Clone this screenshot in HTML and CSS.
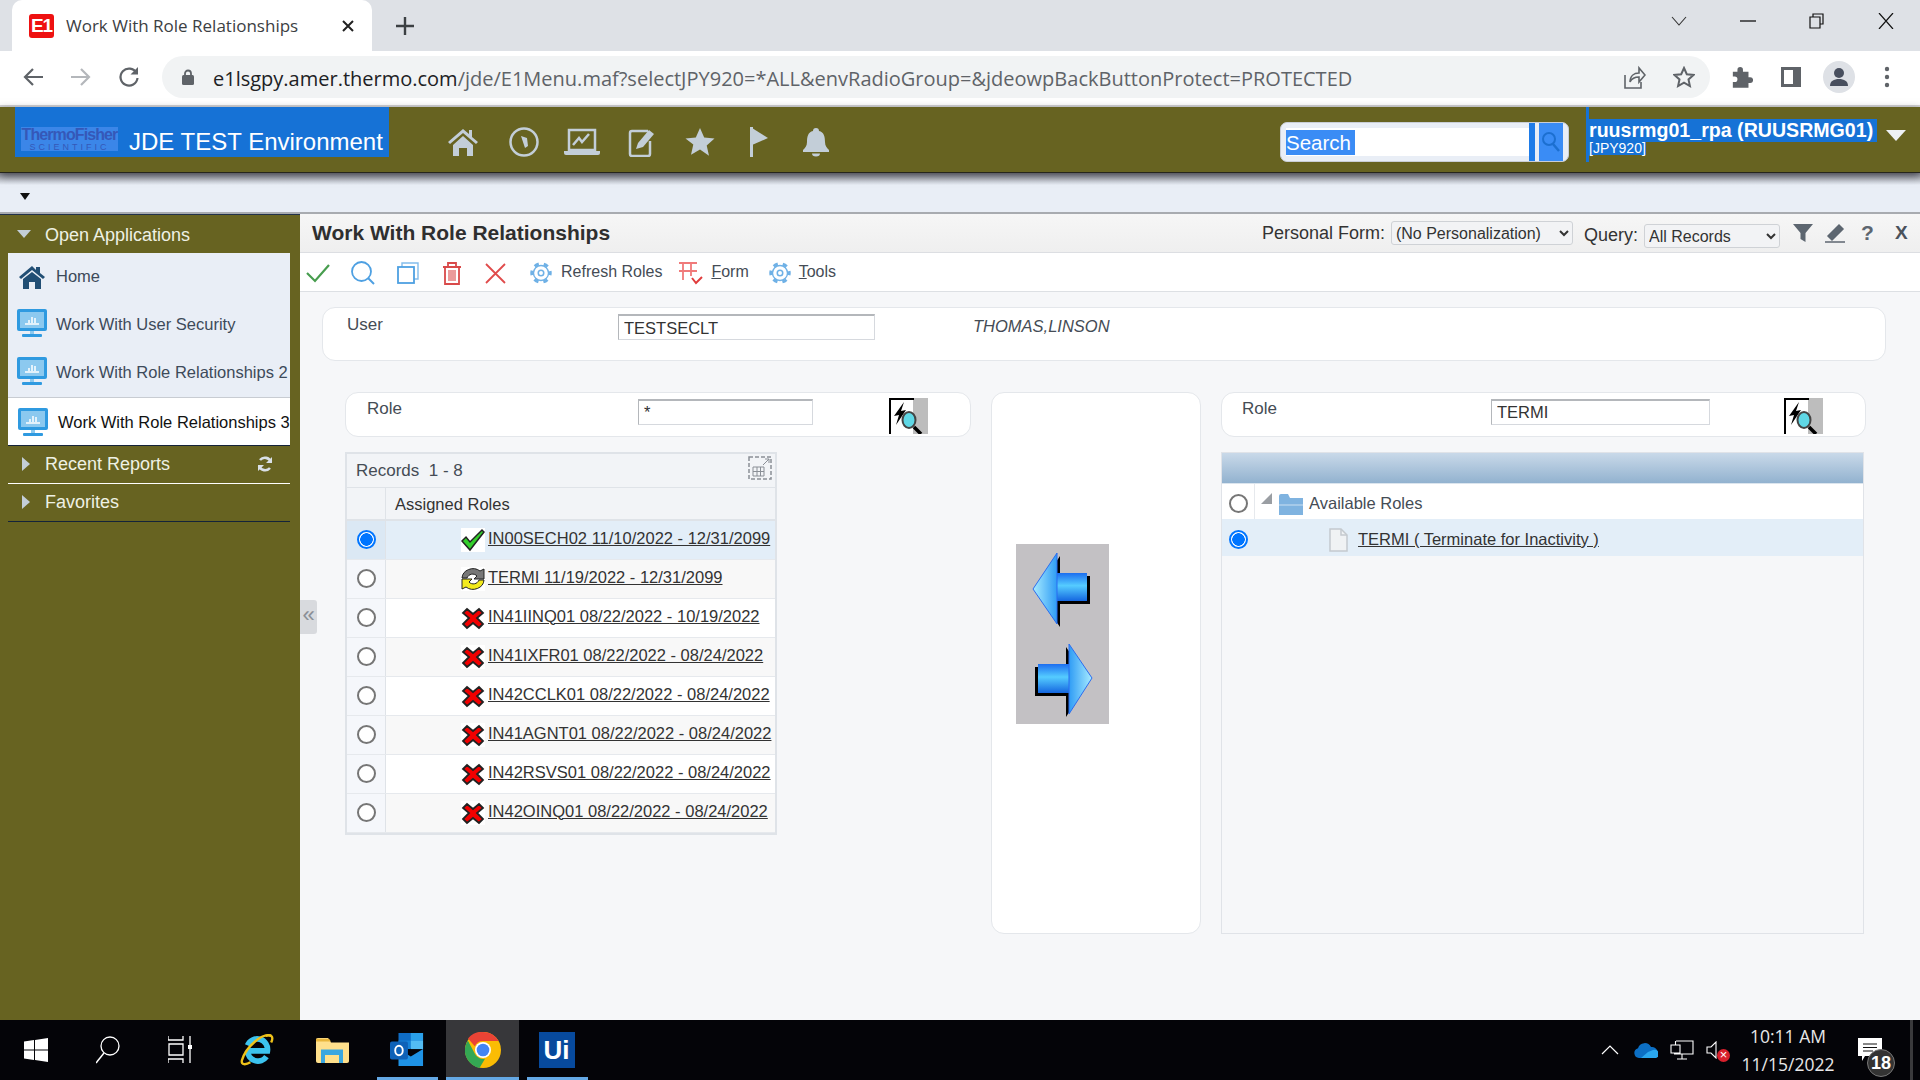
FILE: index.html
```html
<!DOCTYPE html>
<html lang="en">
<head>
    <meta charset="UTF-8">
    <title>Work With Role Relationships</title>
    <link rel="stylesheet" href="styles.css">
</head>
<body>

    <!-- Shared icons -->
    <svg class="icon-defs" width="0" height="0">
        <defs>
            <linearGradient id="arrow-fill" x1="0" y1="0" x2="0" y2="1">
                <stop offset="0" stop-color="#1c6ef0"/>
                <stop offset="0.45" stop-color="#55ccff"/>
                <stop offset="1" stop-color="#1466e0"/>
            </linearGradient>
            <linearGradient id="head-left" x1="0" y1="0" x2="1" y2="0">
                <stop offset="0" stop-color="#a8ecff"/>
                <stop offset="1" stop-color="#2f9cf5"/>
            </linearGradient>
            <linearGradient id="head-right" x1="0" y1="0" x2="1" y2="0">
                <stop offset="0" stop-color="#2f9cf5"/>
                <stop offset="1" stop-color="#a8ecff"/>
            </linearGradient>
            <symbol id="ic-gear" viewBox="0 0 24 24">
                <circle cx="12" cy="12" r="8.2" fill="none" stroke="#6fb1e6" stroke-width="1.5"/>
                <circle cx="12" cy="12" r="10" fill="none" stroke="#6fb1e6" stroke-width="3.4" stroke-dasharray="5 5.47" stroke-dashoffset="2.5"/>
                <circle cx="12" cy="12" r="6.5" fill="#fff"/>
                <circle cx="12" cy="12" r="3" fill="none" stroke="#6fb1e6" stroke-width="1.7"/>
            </symbol>
            <symbol id="ic-lookup" viewBox="0 0 39 36">
                <rect width="39" height="36" fill="#fff"/>
                <rect x="24" width="15" height="36" fill="#bdbdbd"/>
                <path d="M1 36V1h24" fill="none" stroke="#000" stroke-width="2"/>
                <path d="M15 4L5 18l5-1-3 10 10-15-5 1z" fill="#000"/>
                <ellipse cx="20" cy="22" rx="6.5" ry="8" fill="#5fd8e6" stroke="#444" stroke-width="2"/>
                <path d="M25 29l7 7" stroke="#000" stroke-width="3.5"/>
            </symbol>
            <symbol id="ic-fail" viewBox="0 0 24 24">
                <rect width="24" height="24" fill="#fff"/>
                <path d="M6 3l6 5 6-5 4 4-6 5 6 6-4 4-6-5-6 5-4-4 6-6-6-5z" fill="#f20000" stroke="#222" stroke-width="1.8"/>
            </symbol>
            <symbol id="ic-monitor" viewBox="0 0 30 29">
                <rect width="30" height="22" rx="2" fill="#2f9ae0"/>
                <rect x="3" y="3" width="24" height="16" fill="#8cc9ef"/>
                <path d="M8 15h14M12 14v-3M15 14V8M18 14v-5" stroke="#fff" stroke-width="1.5"/>
                <rect x="5" y="25" width="20" height="3" rx="1" fill="#2f9ae0"/>
                <rect x="13" y="22" width="4" height="3" fill="#8cc9ef"/>
            </symbol>
        </defs>
    </svg>

    <!-- Browser tabs -->
    <div class="tabstrip">
        <div class="tab">
            <span class="favicon">E1</span>
            <span class="tab-title">Work With Role Relationships</span>
            <svg class="tab-close" width="12" height="12" viewBox="0 0 12 12"><path d="M1 1l10 10M11 1L1 11" stroke="#222" stroke-width="2"/></svg>
        </div>
        <svg class="tab-new" width="18" height="18" viewBox="0 0 18 18"><path d="M9 0v18M0 9h18" stroke="#3c4043" stroke-width="2.4"/></svg>
        <div class="window-controls">
            <svg width="16" height="10" viewBox="0 0 16 10"><path d="M1 1l7 8 7-8" fill="none" stroke="#333" stroke-width="1.1"/></svg>
            <svg width="16" height="2" viewBox="0 0 16 2"><path d="M0 1h16" stroke="#111" stroke-width="1.3"/></svg>
            <svg width="16" height="16" viewBox="0 0 16 16"><path d="M1 4h10v11H1zM4 4V1h10v10h-3" fill="none" stroke="#111" stroke-width="1.2"/></svg>
            <svg width="16" height="16" viewBox="0 0 16 16"><path d="M1 0l14 16M15 0L1 16" stroke="#111" stroke-width="1.2"/></svg>
        </div>
    </div>

    <!-- Address bar -->
    <div class="addressbar">
        <svg class="nav-btn nav-back" width="22" height="20" viewBox="0 0 22 20"><path d="M21 10H3M11 2l-8 8 8 8" fill="none" stroke="#5f6368" stroke-width="2.2"/></svg>
        <svg class="nav-btn nav-fwd" width="22" height="20" viewBox="0 0 22 20"><path d="M1 10h18M11 2l8 8-8 8" fill="none" stroke="#b4b7bb" stroke-width="2.2"/></svg>
        <svg class="nav-btn nav-reload" width="22" height="22" viewBox="0 0 22 22"><path d="M18.5 7A8.5 8.5 0 1 0 19.5 12" fill="none" stroke="#5f6368" stroke-width="2.2"/><path d="M20 1v7.5h-7.5z" fill="#5f6368"/></svg>
        <div class="omnibox">
            <svg class="lock" width="12" height="16" viewBox="0 0 12 16"><path d="M3 7V4.500a3 3 0 0 1 6 0V7" fill="none" stroke="#5f6368" stroke-width="1.8"/><rect y="6" width="12" height="10" rx="1.5" fill="#5f6368"/></svg>
            <span class="url"><span class="url-host">e1lsgpy.amer.thermo.com</span>/jde/E1Menu.maf?selectJPY920=*ALL&amp;envRadioGroup=&amp;jdeowpBackButtonProtect=PROTECTED</span>
            <svg class="omni-share" width="22" height="24" viewBox="0 0 22 24"><path d="M1 10v13h16v-6M6 17c0-6 4-9 9-9V3l6 7-6 7v-5c-4 0-7 1-9 5z" fill="none" stroke="#5f6368" stroke-width="1.6"/></svg>
            <svg class="omni-star" width="22" height="22" viewBox="0 0 22 22"><path d="M11 2l2.800 6.200 6.700.7-5 4.500 1.400 6.600L11 16.600 5.100 20l1.400-6.600-5-4.500 6.700-.7z" fill="none" stroke="#5f6368" stroke-width="2"/></svg>
        </div>
        <svg class="ext-icon" width="22" height="24" viewBox="0 0 22 24"><path d="M2 7h5V5a3 3 0 0 1 6 0v2h6v6h2a3 3 0 0 1 0 6h-2v5H2v-6h2a3 3 0 0 0 0-6H2z" fill="#5f6368" transform="scale(.92 .95)"/></svg>
        <svg class="side-icon" width="20" height="20" viewBox="0 0 20 20"><rect x="1.5" y="1.5" width="17" height="17" fill="none" stroke="#5f6368" stroke-width="3"/><rect x="12" y="2" width="6" height="16" fill="#5f6368"/></svg>
        <svg class="avatar" width="32" height="32" viewBox="0 0 32 32"><circle cx="16" cy="16" r="16" fill="#dee1e6"/><circle cx="16" cy="12" r="5" fill="#484f5e"/><path d="M7 25c0-5 4-7 9-7s9 2 9 7z" fill="#484f5e"/></svg>
        <svg class="menu-dots" width="6" height="22" viewBox="0 0 6 22"><circle cx="3" cy="3" r="2.2" fill="#5f6368"/><circle cx="3" cy="11" r="2.2" fill="#5f6368"/><circle cx="3" cy="19" r="2.2" fill="#5f6368"/></svg>
    </div>

    <!-- JDE header -->
    <div class="jde-header">
        <div class="brand">
            <div class="brand-logo">
                <span class="logo-top">ThermoFisher</span>
                <span class="logo-bottom">SCIENTIFIC</span>
            </div>
            <span class="brand-name">JDE TEST Environment</span>
        </div>
        <div class="header-icons">
            <svg width="30" height="28" viewBox="0 0 30 28"><path d="M15 1L0 14l2 2L15 5l13 11 2-2-6-5V2h-3v4z" fill="#c3ced8"/><path d="M5 17L15 8l10 9v11h-6v-8h-8v8H5z" fill="#c3ced8"/></svg>
            <svg width="30" height="30" viewBox="0 0 30 30"><circle cx="15" cy="15" r="13.5" fill="none" stroke="#c3ced8" stroke-width="2.5"/><path d="M12 9l6 2 1 8-3 2z" fill="#c3ced8"/></svg>
            <svg width="36" height="30" viewBox="0 0 36 30"><path d="M5 3h26v20H5z" fill="none" stroke="#c3ced8" stroke-width="2.5"/><path d="M9 18l6-7 3 4 7-8" fill="none" stroke="#c3ced8" stroke-width="2.5"/><path d="M0 24h36v2a2 2 0 0 1-2 2H2a2 2 0 0 1-2-2z" fill="#c3ced8"/></svg>
            <svg width="28" height="30" viewBox="0 0 28 30"><path d="M20 4H4a2 2 0 0 0-2 2v21a2 2 0 0 0 2 2h16a2 2 0 0 0 2-2V14" fill="none" stroke="#c3ced8" stroke-width="2.5"/><path d="M8 22l2-6L21 3l5 4-11 13z" fill="#c3ced8"/></svg>
            <svg width="30" height="30" viewBox="0 0 30 30"><path d="M15 1l4.200 9.600 10.300 1-7.800 6.900 2.300 10.200L15 22.500l-9 5.200 2.300-10.200L.5 11.600l10.300-1z" fill="#c3ced8"/></svg>
            <svg width="20" height="30" viewBox="0 0 20 30"><path d="M1.500 0v30" stroke="#c3ced8" stroke-width="3"/><path d="M2 1l16 10L2 18z" fill="#c3ced8"/></svg>
            <svg width="30" height="30" viewBox="0 0 30 30"><path d="M15 1a3 3 0 0 1 3 3c5 1 6 6 6 11 0 4 2 6 4 8v2H2v-2c2-2 4-4 4-8 0-5 1-10 6-11a3 3 0 0 1 3-3z" fill="#c3ced8"/><path d="M11 26.500h8a4 3 0 0 1-8 0z" fill="#c3ced8"/></svg>
        </div>
        <div class="search-box">
            <div class="search-inner"><span class="search-text">Search</span></div>
            <span class="search-bar"></span>
            <span class="search-btn">
                <svg width="20" height="24" viewBox="0 0 20 24"><circle cx="8" cy="9" r="6" fill="none" stroke="#1c6fd0" stroke-width="2"/><path d="M12 14l6 7" stroke="#1c6fd0" stroke-width="2.5"/></svg>
            </span>
        </div>
        <div class="user-info">
            <span class="user-name">ruusrmg01_rpa (RUUSRMG01)</span>
            <span class="user-env">[JPY920]</span>
        </div>
        <span class="user-caret"></span>
    </div>

    <div class="sub-band"><span class="sub-caret"></span></div>

    <div class="workspace">
        <!-- Left navigation -->
        <aside class="sidebar">
            <div class="nav-heading nav-open">
                <span class="tri-down"></span>
                <span>Open Applications</span>
            </div>
            <div class="open-apps">
                <div class="app-row">
                    <svg class="app-home" width="26" height="24" viewBox="0 0 26 24"><path d="M13 1L0 12l2 2L13 5l11 9 2-2-5-4V2h-4v3z" fill="#214e74"/><path d="M4 14l9-7 9 7v10h-6v-7h-6v7H4z" fill="#214e74"/></svg>
                    <span>Home</span>
                </div>
                <div class="app-row">
                    <svg class="app-monitor" width="30" height="29"><use href="#ic-monitor"/></svg>
                    <span>Work With User Security</span>
                </div>
                <div class="app-row">
                    <svg class="app-monitor" width="30" height="29"><use href="#ic-monitor"/></svg>
                    <span>Work With Role Relationships 2</span>
                </div>
                <div class="app-row app-current">
                    <svg class="app-monitor" width="30" height="29"><use href="#ic-monitor"/></svg>
                    <span>Work With Role Relationships 3</span>
                </div>
            </div>
            <div class="nav-heading nav-reports">
                <span class="tri-right"></span>
                <span>Recent Reports</span>
                <svg class="nav-refresh" width="16" height="16" viewBox="0 0 16 16"><path d="M14 6A6.5 6.5 0 0 0 3 4M2 10a6.5 6.5 0 0 0 11 2" fill="none" stroke="#d9e0e6" stroke-width="2.6"/><path d="M15 1v6H9zM1 15V9h6z" fill="#d9e0e6"/></svg>
            </div>
            <div class="nav-heading nav-favs">
                <span class="tri-right"></span>
                <span>Favorites</span>
            </div>
        </aside>

        <main class="content">
            <!-- Collapse handle sits over the content edge -->
            <div class="collapse-handle">«</div>

            <div class="form-title">
                <h1>Work With Role Relationships</h1>
                <div class="form-options">
                    <label class="opt-label">Personal Form:</label>
                    <select class="opt-select select-personal"><option>(No Personalization)</option></select>
                    <label class="opt-label opt-query">Query:</label>
                    <select class="opt-select select-query"><option>All Records</option></select>
                    <svg class="opt-filter" width="20" height="20" viewBox="0 0 20 20"><path d="M0 1h20l-7.5 9v9l-5-3v-6z" fill="#5d6670"/></svg>
                    <svg class="opt-pencil" width="20" height="20" viewBox="0 0 20 20"><path d="M3 13L14 2l4 4L7 17zM0 19h20" fill="#5d6670" stroke="#5d6670" stroke-width="1.5"/></svg>
                    <span class="opt-help">?</span>
                    <span class="opt-close">X</span>
                </div>
            </div>

            <div class="toolbar">
                <svg class="tb-check" width="24" height="20" viewBox="0 0 24 20"><path d="M1 10l8 8L23 2" fill="none" stroke="#479d4e" stroke-width="2.2"/></svg>
                <svg class="tb-find" width="24" height="24" viewBox="0 0 24 24"><circle cx="10.5" cy="10.5" r="9.5" fill="none" stroke="#4ea0e2" stroke-width="1.8"/><path d="M17 17l6 6" stroke="#4ea0e2" stroke-width="2"/></svg>
                <svg class="tb-copy" width="22" height="22" viewBox="0 0 22 22"><rect x="1" y="5" width="16" height="16" fill="none" stroke="#4ea0e2" stroke-width="1.8"/><path d="M5 5V1h16v16h-4" fill="none" stroke="#4ea0e2" stroke-width="1.4" opacity=".7"/></svg>
                <svg class="tb-trash" width="18" height="23" viewBox="0 0 18 23"><path d="M0 5h18M5 5V1h8v4" fill="none" stroke="#d94a4a" stroke-width="1.8"/><path d="M2 5h14v17H2z" fill="none" stroke="#d94a4a" stroke-width="1.8"/><rect x="5" y="8" width="8" height="11" fill="#eb9b9b"/></svg>
                <svg class="tb-cancel" width="21" height="21" viewBox="0 0 21 21"><path d="M1 1l19 19M20 1L1 20" stroke="#e04b4b" stroke-width="1.8"/></svg>
                <svg class="tb-gear tb-gear-first" width="22" height="22"><use href="#ic-gear"/></svg>
                <span class="tb-text tb-refresh">Refresh Roles</span>
                <svg class="tb-form" width="25" height="23" viewBox="0 0 25 23"><path d="M0 1h18M0 9h18M4 1v17M12 1v13" fill="none" stroke="#f07a7a" stroke-width="1.8"/><path d="M13 16l4 5 6-6" fill="none" stroke="#e03c3c" stroke-width="2"/></svg>
                <span class="tb-text tb-form-label"><u>F</u>orm</span>
                <svg class="tb-gear tb-gear-tools" width="22" height="22"><use href="#ic-gear"/></svg>
                <span class="tb-text tb-tools-label"><u>T</u>ools</span>
            </div>

            <section class="form-body">
                <div class="panel user-panel">
                    <label class="field-label user-label">User</label>
                    <input class="field-input user-input" value="TESTSECLT">
                    <span class="user-fullname">THOMAS,LINSON</span>
                </div>

                <div class="columns">
                    <div class="col-left">
                        <div class="panel role-panel">
                            <label class="field-label role-label-left">Role</label>
                            <input class="field-input role-input-left" value="*">
                            <svg class="lookup lookup-left" width="39" height="36"><use href="#ic-lookup"/></svg>
                        </div>

                        <div class="grid">
                            <div class="grid-records">
                                <span>Records&nbsp; 1 - 8</span>
                                <svg class="grid-expand" width="24" height="24" viewBox="0 0 24 24"><rect x="1" y="1" width="22" height="22" fill="none" stroke="#8a8f96" stroke-width="1.5" stroke-dasharray="4 2"/><path d="M5 11h11v9H5zM5 15.5h11M9 11v9M12.500 11v9M15 9l6-6M17 3h4v4" fill="none" stroke="#8a8f96"/></svg>
                            </div>
                            <div class="grid-head">
                                <span class="cell-radio"></span>
                                <span class="head-title">Assigned Roles</span>
                            </div>
                            <div class="grid-row row-selected">
                                <span class="cell-radio"><span class="radio radio-on"></span></span>
                                <span class="cell-role">
                                    <svg class="status" width="24" height="24" viewBox="0 0 24 24"><rect width="24" height="24" fill="#fff"/><path d="M1 13l4-4 4 5L21 2l2 2L9 22z" fill="#33cf2b" stroke="#222" stroke-width="1.5"/></svg>
                                    <a>IN00SECH02 11/10/2022 - 12/31/2099</a>
                                </span>
                            </div>
                            <div class="grid-row row-even">
                                <span class="cell-radio"><span class="radio"></span></span>
                                <span class="cell-role">
                                    <svg class="status" width="24" height="24" viewBox="0 0 24 24"><rect width="24" height="24" fill="#fff"/><path d="M1 11A11 10 0 0 1 19 4l4-2v10H13l3-3a6 6 0 0 0-10 2z" fill="#777" stroke="#222"/><path d="M23 13A11 10 0 0 1 5 20l-4 2V12h10l-3 3a6 6 0 0 0 10-2z" fill="#f2ea1c" stroke="#222"/></svg>
                                    <a>TERMI 11/19/2022 - 12/31/2099</a>
                                </span>
                            </div>
                            <div class="grid-row">
                                <span class="cell-radio"><span class="radio"></span></span>
                                <span class="cell-role"><svg class="status" width="24" height="24"><use href="#ic-fail"/></svg><a>IN41IINQ01 08/22/2022 - 10/19/2022</a></span>
                            </div>
                            <div class="grid-row row-even">
                                <span class="cell-radio"><span class="radio"></span></span>
                                <span class="cell-role"><svg class="status" width="24" height="24"><use href="#ic-fail"/></svg><a>IN41IXFR01 08/22/2022 - 08/24/2022</a></span>
                            </div>
                            <div class="grid-row">
                                <span class="cell-radio"><span class="radio"></span></span>
                                <span class="cell-role"><svg class="status" width="24" height="24"><use href="#ic-fail"/></svg><a>IN42CCLK01 08/22/2022 - 08/24/2022</a></span>
                            </div>
                            <div class="grid-row row-even">
                                <span class="cell-radio"><span class="radio"></span></span>
                                <span class="cell-role"><svg class="status" width="24" height="24"><use href="#ic-fail"/></svg><a>IN41AGNT01 08/22/2022 - 08/24/2022</a></span>
                            </div>
                            <div class="grid-row">
                                <span class="cell-radio"><span class="radio"></span></span>
                                <span class="cell-role"><svg class="status" width="24" height="24"><use href="#ic-fail"/></svg><a>IN42RSVS01 08/22/2022 - 08/24/2022</a></span>
                            </div>
                            <div class="grid-row row-even">
                                <span class="cell-radio"><span class="radio"></span></span>
                                <span class="cell-role"><svg class="status" width="24" height="24"><use href="#ic-fail"/></svg><a>IN42OINQ01 08/22/2022 - 08/24/2022</a></span>
                            </div>
                        </div>
                    </div>

                    <div class="panel col-center">
                        <svg class="move-arrows" width="93" height="180" viewBox="0 0 93 180">
                            <rect width="93" height="180" fill="#c3c1c4"/>
                            <path d="M41 9L17 45l24 35V57h30V29H41z" fill="#000" transform="translate(3 3)"/>
                            <path d="M41 29h30v28H41z" fill="url(#arrow-fill)"/>
                            <path d="M41 9L17 45l24 35z" fill="url(#head-left)" stroke="#2b6cf0"/>
                            <path d="M53 100l23 34-23 36v-21H22v-29h31z" fill="#000" transform="translate(-3 3)"/>
                            <path d="M22 120h31v29H22z" fill="url(#arrow-fill)"/>
                            <path d="M53 100l23 34-23 36z" fill="url(#head-right)" stroke="#2b6cf0"/>
                        </svg>
                    </div>

                    <div class="col-right">
                        <div class="panel role-panel">
                            <label class="field-label role-label-right">Role</label>
                            <input class="field-input role-input-right" value="TERMI">
                            <svg class="lookup lookup-right" width="39" height="36"><use href="#ic-lookup"/></svg>
                        </div>

                        <div class="tree">
                            <div class="tree-head"></div>
                            <div class="tree-row tree-root">
                                <span class="tree-radio"><span class="radio"></span></span>
                                <span class="tree-tri"></span>
                                <svg class="tree-folder" width="24" height="21" viewBox="0 0 24 21"><path d="M0 2a2 2 0 0 1 2-2h7l2 4h13v17H0z" fill="#7fb3e0"/><path d="M0 11h24" stroke="#fff" stroke-opacity=".6"/></svg>
                                <span>Available Roles</span>
                            </div>
                            <div class="tree-row tree-leaf">
                                <span class="tree-radio"><span class="radio radio-on"></span></span>
                                <svg class="tree-doc" width="19" height="24" viewBox="0 0 19 24"><path d="M1 1h11l6 6v16H1z" fill="#f0f2f4" stroke="#c4c9ce" stroke-width="1.5"/><path d="M12 1v6h6" fill="none" stroke="#c4c9ce" stroke-width="1.5"/></svg>
                                <a>TERMI ( Terminate for Inactivity )</a>
                            </div>
                        </div>
                    </div>
                </div>
            </section>
        </main>
    </div>

    <!-- Windows taskbar -->
    <footer class="taskbar">
        <div class="task-apps">
            <span class="task-slot"><svg width="24" height="24" viewBox="0 0 24 24"><path d="M0 3.500l10-1.400V11.500H0zM11 2l13-2v11.500H11zM0 12.500h10v9.400L0 20.500zM11 12.500h13V24l-13-2z" fill="#fff"/></svg></span>
            <span class="task-slot"><svg width="24" height="28" viewBox="0 0 24 28"><circle cx="14" cy="10" r="9" fill="none" stroke="#fff" stroke-width="1.3"/><path d="M8 17L0 27" stroke="#fff" stroke-width="1.5"/></svg></span>
            <span class="task-slot"><svg width="24" height="28" viewBox="0 0 24 28"><path d="M0 0v4h15V0M1 8h14v11H1zM0 27v-4h15v4" fill="none" stroke="#fff" stroke-width="1.3"/><path d="M22 0v9M22 13v14" stroke="#fff" stroke-width="1.3"/><rect x="20" y="9" width="4" height="4" fill="#fff"/></svg></span>
            <span class="task-slot task-ie"><svg width="34" height="34" viewBox="0 0 36 34"><path d="M8 18h21a11 11 0 0 0-21-6M8 18a11 11 0 0 0 20 6" fill="none" stroke="#3cc3ee" stroke-width="6"/><path d="M33 2C24-2 6 14 2 28c-1 5 4 5 9 2" fill="none" stroke="#eec21a" stroke-width="2.5"/><path d="M27 2c6-2 9 1 6 7" fill="none" stroke="#eec21a" stroke-width="2.5"/></svg></span>
            <span class="task-slot task-files"><svg width="33" height="26" viewBox="0 0 33 29" preserveAspectRatio="none"><path d="M0 3a2 2 0 0 1 2-2h10l3 5h18v21a2 2 0 0 1-2 2H2a2 2 0 0 1-2-2z" fill="#ffe08c"/><path d="M0 2h13l2 3H0z" fill="#e9b63c"/><path d="M5 29V14h22v15h-4v-9H9v9z" fill="#3aa7e0"/></svg></span>
            <span class="task-slot task-open task-outlook"><svg width="36" height="34" viewBox="0 0 36 36"><rect x="9" y="0" width="26" height="16" fill="#0f6cc4"/><rect x="22" y="0" width="13" height="8" fill="#2aa0ea"/><rect x="9" y="8" width="13" height="9" fill="#1583d8"/><rect x="22" y="8" width="13" height="9" fill="#53bcf2"/><path d="M9 17l13 8 13-8v18H9z" fill="#1f93e6"/><rect x="0" y="9" width="19" height="19" rx="2" fill="#0e62b8"/><ellipse cx="9.5" cy="18.5" rx="4" ry="5" fill="none" stroke="#fff" stroke-width="2"/></svg></span>
            <span class="task-slot task-open task-active"><svg width="36" height="36" viewBox="0 0 36 36"><circle cx="18" cy="18" r="18" fill="#fbbc04"/><path d="M18 0a18 18 0 0 1 15.6 9H18a9 9 0 0 0-8.200 5.300L3 6.500A18 18 0 0 1 18 0z" fill="#ea4335"/><path d="M2.800 8.500L10 22a9 9 0 0 0 10 4.800L14.500 36A18 18 0 0 1 2.800 8.500z" fill="#34a853"/><circle cx="18" cy="18" r="8" fill="#fff"/><circle cx="18" cy="18" r="6.3" fill="#4285f4"/></svg></span>
            <span class="task-slot task-open task-ui"><span class="uipath">Ui</span></span>
        </div>
        <div class="tray">
            <svg class="tray-chevron" width="18" height="10" viewBox="0 0 18 10"><path d="M1 9l8-8 8 8" fill="none" stroke="#fff" stroke-width="1.2"/></svg>
            <svg class="tray-cloud" width="24" height="16" viewBox="0 0 24 16"><path d="M5 16a5 5 0 0 1-1-9.800A7 7 0 0 1 17 5a5.500 5.500 0 0 1 2 11z" fill="#0c6fc4"/><path d="M7 16l7-6 5-2a4 4 0 0 1 3 8z" fill="#2aa7ee"/></svg>
            <svg class="tray-network" width="24" height="20" viewBox="0 0 24 20"><path d="M6 1h17v13H4M12 14v5M7 19h10M1 5h9v8H1zM5.500 1v4" fill="none" stroke="#fff" stroke-width="1.1"/></svg>
            <span class="tray-sound">
                <svg width="11" height="18" viewBox="0 0 11 18"><path d="M10 1v16L5 12H1V6h4z" fill="none" stroke="#fff" stroke-width="1.1"/></svg>
                <span class="sound-x">×</span>
            </span>
            <div class="clock">
                <span>10:11 AM</span>
                <span>11/15/2022</span>
            </div>
            <span class="notify">
                <svg width="24" height="24" viewBox="0 0 24 24"><path d="M0 0h24v18H7l-3 5v-5H0z" fill="#fff"/><path d="M5 6h14M5 9.500h14M5 13h10" stroke="#111"/></svg>
                <span class="notify-count">18</span>
            </span>
        </div>
    </footer>

</body>
</html>
```

FILE: styles.css
```css
/* Page frame */
html, body {
    margin: 0;
    padding: 0;
    height: 100%;
    overflow: hidden;
}

body {
    width: 1920px;
    height: 1080px;
    display: flex;
    flex-direction: column;
    font-family: "Liberation Sans", Arial, sans-serif;
    color: #333;
    background: #fff;
}

.icon-defs {
    position: absolute;
}

svg {
    display: block;
    flex: none;
}

/* Browser tabs */
.tabstrip {
    height: 51px;
    background: #dee1e6;
    display: flex;
    align-items: center;
    flex: none;
}

.tab {
    width: 360px;
    height: 51px;
    margin-left: 12px;
    background: #fff;
    border-radius: 10px 10px 0 0;
    display: flex;
    align-items: center;
    box-sizing: border-box;
    padding-left: 17px;
}

.favicon {
    width: 25px;
    height: 24px;
    background: #ee1111;
    border-radius: 3px;
    color: #fff;
    font-size: 19px;
    font-weight: bold;
    line-height: 24px;
    text-align: center;
    letter-spacing: -1px;
}

.tab-title {
    margin-left: 12px;
    font-family: "Open Sans", sans-serif;
    font-size: 17px;
    color: #3c4043;
    white-space: nowrap;
    width: 276px;
}

.tab-new {
    margin-left: 24px;
}

.window-controls {
    margin-left: auto;
    display: flex;
    align-items: center;
    height: 42px;
    align-self: flex-start;
    gap: 53px;
    margin-right: 26px;
}

/* Address bar */
.addressbar {
    height: 56px;
    box-sizing: border-box;
    background: #fff;
    border-bottom: 2px solid #d4d4d6;
    display: flex;
    align-items: center;
    padding-bottom: 2px;
    flex: none;
}

.nav-btn {
    margin-left: 26px;
}

.nav-back {
    margin-left: 22px;
}

.omnibox {
    width: 1548px;
    height: 42px;
    margin-left: 22px;
    box-sizing: border-box;
    padding-left: 20px;
    background: #f1f3f4;
    border-radius: 21px;
    display: flex;
    align-items: center;
}

.url {
    margin: 2px 0 0 19px;
    width: 1138px;
    font-family: "Open Sans", sans-serif;
    font-size: 20px;
    color: #5f6368;
    white-space: nowrap;
}

.url-host {
    color: #202124;
}

.omni-share {
    margin-left: 273px;
}

.omni-star {
    margin-left: 27px;
}

.ext-icon {
    margin-left: 21px;
}

.side-icon {
    margin-left: 28px;
}

.avatar {
    margin-left: 22px;
}

.menu-dots {
    margin-left: 29px;
}

/* JDE header */
.jde-header {
    height: 66px;
    box-sizing: border-box;
    background: #676321;
    border-bottom: 1px solid #26261c;
    display: flex;
    align-items: flex-start;
    flex: none;
    position: relative;
    z-index: 2;
    box-shadow: 0 3px 8px rgba(40, 40, 50, 0.65);
}

.brand {
    width: 374px;
    height: 50px;
    margin-left: 15px;
    background: #1672d6;
    display: flex;
    align-items: flex-end;
    box-sizing: border-box;
    padding: 0 0 6px 6px;
}

.brand-logo {
    width: 97px;
    height: 24px;
    background: #3b86e8;
    display: flex;
    flex-direction: column;
    align-items: center;
    color: #3558b8;
    line-height: 1;
    white-space: nowrap;
    overflow: hidden;
}

.logo-top {
    font-size: 16px;
    font-weight: bold;
    letter-spacing: -0.9px;
}

.logo-bottom {
    font-size: 9px;
    letter-spacing: 3px;
}

.brand-name {
    margin: 0 0 -6px 11px;
    font-size: 24px;
    color: #fff;
    white-space: nowrap;
    line-height: 30px;
}

.header-icons {
    display: flex;
    align-items: center;
    height: 70px;
    margin-left: 59px;
}

.header-icons svg:nth-child(1) { margin-right: 31px; }
.header-icons svg:nth-child(2) { margin-right: 25px; }
.header-icons svg:nth-child(3) { margin-right: 28px; }
.header-icons svg:nth-child(4) { margin-right: 29px; }
.header-icons svg:nth-child(5) { margin-right: 35px; }
.header-icons svg:nth-child(6) { margin-right: 31px; }

.search-box {
    position: absolute;
    left: 1280px;
    top: 15px;
    width: 289px;
    height: 40px;
    box-sizing: border-box;
    background: #e9eef6;
    border: 1px solid #c9ced6;
    border-radius: 7px;
    display: flex;
    align-items: center;
    padding: 0 5px;
}

.search-inner {
    width: 243px;
    height: 28px;
    background: #fff;
    flex: none;
    display: flex;
    align-items: center;
}

.search-text {
    background: #3a8cf5;
    color: #fff;
    font-size: 20.5px;
    line-height: 25px;
    width: 69px;
}

.search-bar {
    width: 6px;
    height: 38px;
    background: #1f7ce8;
    flex: none;
}

.search-btn {
    width: 24px;
    height: 38px;
    margin-left: 4px;
    background: #3a8cf5;
    flex: none;
    display: flex;
    align-items: center;
    justify-content: center;
}

.user-info {
    position: absolute;
    left: 1586px;
    top: 0;
    height: 55px;
    border-left: 3px solid #1672d6;
    display: flex;
    flex-direction: column;
    align-items: flex-start;
    padding-top: 12px;
    box-sizing: border-box;
}

.user-name {
    background: #1672d6;
    color: #fff;
    font-size: 19.6px;
    font-weight: bold;
    line-height: 23px;
    padding-right: 4px;
    white-space: nowrap;
}

.user-env {
    background: #1672d6;
    color: #fff;
    font-size: 14px;
    line-height: 13px;
}

.user-caret {
    position: absolute;
    left: 1886px;
    top: 23px;
    border-left: 10px solid transparent;
    border-right: 10px solid transparent;
    border-top: 11px solid #eef1f5;
}

.sub-band {
    height: 41px;
    box-sizing: border-box;
    background: linear-gradient(#8d9097 0, #e9eef6 12px);
    border-bottom: 2px solid #a8abb0;
    display: flex;
    align-items: center;
    flex: none;
    padding-left: 20px;
}

.sub-caret {
    border-left: 5px solid transparent;
    border-right: 5px solid transparent;
    border-top: 7px solid #111;
    margin-top: 8px;
}

/* Workspace */
.workspace {
    flex: 1;
    display: flex;
    min-height: 0;
}

.sidebar {
    width: 300px;
    background: #676321;
    border-top: 1px solid #22324a;
    flex: none;
    box-sizing: border-box;
    padding: 0 10px 0 8px;
}

.nav-heading {
    display: flex;
    align-items: center;
    color: #eef1e4;
    font-size: 18px;
    position: relative;
    padding-left: 37px;
}

.nav-open {
    height: 38px;
    padding-top: 2px;
    box-sizing: border-box;
}

.nav-reports {
    height: 37px;
    border-top: 1px solid #14233a;
    border-bottom: 1px solid #fff;
}

.nav-favs {
    height: 37px;
    border-bottom: 1px solid #14233a;
}

.tri-down {
    position: absolute;
    left: 9px;
    top: 15px;
    border-left: 7px solid transparent;
    border-right: 7px solid transparent;
    border-top: 8px solid #c3ced8;
}

.tri-right {
    position: absolute;
    left: 14px;
    top: 11px;
    border-top: 7px solid transparent;
    border-bottom: 7px solid transparent;
    border-left: 8px solid #c3ced8;
}

.nav-refresh {
    position: absolute;
    right: 17px;
    top: 10px;
}

.open-apps {
    background: #e9eef6;
}

.app-row {
    height: 48px;
    display: flex;
    align-items: center;
    font-size: 16.5px;
    color: #3d4a5a;
    white-space: nowrap;
    overflow: hidden;
}

.app-row > span {
    margin-top: -2px;
}

.app-home {
    margin: 0 11px 0 11px;
}

.app-monitor {
    margin: -3px 9px 0 9px;
}

.app-current {
    background: #fff;
    color: #111;
    border-top: 1px solid #c8ccd2;
    box-sizing: border-box;
}

.app-current > span {
    margin-top: 2px;
}

.app-current .app-monitor {
    margin: 1px 10px 0 10px;
}

/* Form content */
.content {
    flex: 1;
    min-width: 0;
    position: relative;
    background: #f6f7f9;
    display: flex;
    flex-direction: column;
}

.collapse-handle {
    position: absolute;
    left: 0;
    top: 386px;
    width: 17px;
    height: 34px;
    background: #d8dade;
    color: #8a8f96;
    font-size: 22px;
    line-height: 30px;
    text-align: center;
    border-radius: 0 3px 3px 0;
}

.form-title {
    height: 39px;
    background: linear-gradient(#f6f6f6, #efefef);
    border-bottom: 1px solid #dcdee2;
    display: flex;
    align-items: center;
    justify-content: space-between;
    box-sizing: border-box;
    padding: 0 13px 0 12px;
    flex: none;
}

.form-title h1 {
    margin: 0;
    font-size: 21px;
    font-weight: bold;
    color: #2f2f2f;
    white-space: nowrap;
}

.form-options {
    display: flex;
    align-items: center;
}

.opt-label {
    font-size: 18px;
    color: #333;
}

.opt-query {
    margin-top: 4px;
}

.opt-select {
    font-family: "Liberation Sans", Arial, sans-serif;
    font-size: 16px;
    color: #333;
    background: #f2f3f5;
    border: 1px solid #cfd2d6;
    border-radius: 3px;
    height: 24px;
    margin-left: 6px;
    padding: 0;
}

.select-personal {
    width: 182px;
    margin-right: 11px;
}

.select-query {
    width: 136px;
    margin-right: 13px;
    margin-top: 6px;
}

.opt-pencil {
    margin-left: 12px;
}

.opt-help {
    margin-left: 16px;
    font-size: 21px;
    font-weight: bold;
    color: #5d6670;
    width: 12px;
}

.opt-close {
    margin-left: 22px;
    font-size: 19px;
    font-weight: bold;
    color: #4a525c;
    width: 12px;
}

.toolbar {
    height: 39px;
    background: #fff;
    border-bottom: 1px solid #dde0e4;
    box-sizing: border-box;
    display: flex;
    align-items: center;
    padding: 2px 0 0 6px;
    flex: none;
}

.tb-find {
    margin-left: 21px;
}

.tb-copy {
    margin-left: 22px;
}

.tb-trash {
    margin-left: 24px;
}

.tb-cancel {
    margin-left: 24px;
}

.tb-gear-first {
    margin-left: 24px;
}

.tb-text {
    font-size: 16px;
    color: #454c55;
    margin-left: 9px;
    margin-top: -2px;
}

.tb-form {
    margin-left: 17px;
}

.tb-form-label {
    margin-left: 7px;
}

.tb-gear-tools {
    margin-left: 20px;
}

.tb-tools-label {
    margin-left: 8px;
}

.form-body {
    flex: 1;
    padding: 15px 34px 0 22px;
    min-height: 0;
}

.panel {
    background: #fff;
    border: 1px solid #e4e7eb;
    border-radius: 13px;
    box-sizing: border-box;
}

.user-panel {
    height: 54px;
    display: flex;
    align-items: flex-start;
    padding: 6px 0 0 24px;
}

.field-label {
    font-size: 17px;
    color: #454c55;
    line-height: 18px;
    flex: none;
}

.field-input {
    height: 26px;
    box-sizing: border-box;
    border: 1px solid #d6d9de;
    border-top: 2px solid #b4b7bb;
    border-left: 1px solid #b4b7bb;
    padding: 1px 0 0 5px;
    font-family: "Liberation Sans", Arial, sans-serif;
    font-size: 16.5px;
    color: #333;
    background: #fff;
    flex: none;
}

.user-label {
    width: 271px;
    margin-top: 2px;
}

.user-input {
    width: 257px;
}

.user-fullname {
    margin: 3px 0 0 98px;
    font-size: 16.5px;
    font-style: italic;
    color: #454c55;
}

.columns {
    margin-top: 31px;
    margin-left: 23px;
    display: flex;
    gap: 20px;
    align-items: flex-start;
}

.col-left {
    width: 626px;
    flex: none;
}

.col-right {
    width: 645px;
    flex: none;
    display: flex;
    flex-direction: column;
    height: 542px;
}

.col-center {
    width: 210px;
    height: 542px;
    flex: none;
    padding: 151px 0 0 24px;
}

.role-panel {
    height: 45px;
    display: flex;
    align-items: flex-start;
    flex: none;
    padding-top: 6px;
}

.role-panel .field-input {
    padding-top: 0;
}

.role-label-left {
    margin: 1px 0 0 21px;
    width: 271px;
}

.role-input-left {
    width: 175px;
}

.lookup-left {
    margin-left: 76px;
    margin-top: -1px;
}

.role-label-right {
    margin: 1px 0 0 20px;
    width: 249px;
}

.role-input-right {
    width: 219px;
}

.lookup-right {
    margin-left: 74px;
    margin-top: -1px;
}

/* Assigned roles grid */
.grid {
    width: 432px;
    margin-top: 15px;
    border: 2px solid #dfe3e8;
    box-sizing: border-box;
    background: #fff;
}

.grid-records {
    height: 34px;
    background: #f2f4f7;
    border-bottom: 1px solid #dfe3e8;
    display: flex;
    align-items: center;
    justify-content: space-between;
    box-sizing: border-box;
    padding: 0 3px 0 9px;
    font-size: 17px;
    color: #454c55;
}

.grid-expand {
    align-self: flex-start;
    margin-top: 2px;
}

.grid-head {
    height: 33px;
    background: #f2f4f7;
    border-bottom: 2px solid #dfe3e8;
    display: flex;
    box-sizing: border-box;
    font-size: 16.5px;
    color: #333;
}

.cell-radio {
    width: 39px;
    flex: none;
    border-right: 1px solid #dfe3e8;
    box-sizing: border-box;
    display: flex;
    align-items: center;
    justify-content: center;
    background: #f5f7fb;
}

.grid-row .radio {
    margin-top: -2px;
}

.grid-head .cell-radio {
    background: none;
}

.head-title {
    margin: 2px 0 0 9px;
    align-self: center;
}

.grid-row {
    height: 39px;
    box-sizing: border-box;
    border-bottom: 1px solid #e6e9ed;
    display: flex;
    background: #fff;
}

.row-even {
    background: #f8f8f8;
}

.row-selected {
    background: #e3eef8;
}

.row-selected .cell-radio {
    background: #dbe8f4;
}

.cell-role {
    margin-left: 75px;
    display: flex;
    align-items: center;
    font-size: 16.5px;
    color: #333;
    white-space: nowrap;
}

.cell-role a, .tree-leaf a {
    text-decoration: underline;
}

.cell-role a {
    margin: -4px 0 0 3px;
}

.radio {
    width: 19px;
    height: 19px;
    border: 2px solid #767676;
    border-radius: 50%;
    box-sizing: border-box;
    display: inline-block;
    background: #fff;
    flex: none;
}

.radio-on {
    border-color: #0075ff;
    background: radial-gradient(circle, #0075ff 0 6px, #fff 6.5px);
}

/* Available roles tree */
.tree {
    margin-top: 15px;
    flex: 1;
    width: 643px;
    border: 1px solid #e0e3e8;
    box-sizing: border-box;
    background: #f6f7f9;
}

.tree-head {
    height: 30px;
    background: linear-gradient(#c9d9e9, #92b2cf);
    border-bottom: 1px solid #dbe5ee;
}

.tree-row {
    display: flex;
    align-items: center;
    font-size: 16.5px;
    color: #454c55;
}

.tree-root {
    height: 35px;
    background: #fff;
}

.tree-leaf {
    height: 37px;
    background: #e3eef8;
    color: #333;
}

.tree-radio {
    width: 33px;
    height: 100%;
    flex: none;
    display: flex;
    align-items: center;
    justify-content: center;
    box-sizing: border-box;
    padding-top: 4px;
}

.tree-leaf > svg, .tree-root > span:last-child {
    margin-top: 4px;
}

.tree-leaf > a {
    margin-top: 3px;
}

.tree-root .tree-radio {
    border-right: 1px solid #e6e9ed;
}

.tree-tri {
    margin: -6px 0 0 6px;
    border-bottom: 11px solid #9a9ea3;
    border-left: 11px solid transparent;
}

.tree-folder {
    margin: 5px 6px 0 7px;
}

.tree-doc {
    margin-left: 74px;
}

.tree-leaf a {
    margin-left: 10px;
}

/* Taskbar */
.taskbar {
    height: 60px;
    background: #040408;
    display: flex;
    justify-content: space-between;
    flex: none;
    border-right: 7px solid #040408;
    box-sizing: border-box;
    box-shadow: inset -3px 0 0 #3a3a3c;
}

.task-apps {
    display: flex;
}

.task-slot {
    width: 72px;
    height: 100%;
    box-sizing: border-box;
    display: flex;
    align-items: center;
    justify-content: center;
}

.task-ie {
    width: 82px;
}

.task-files {
    width: 68px;
}

.task-open {
    width: 61px;
    margin-left: 8px;
    border-bottom: 3px solid #64a8e4;
    padding-top: 3px;
}

.task-outlook {
    margin-left: 11px;
    padding-right: 2px;
}

.task-ui {
    padding-right: 2px;
}

.task-active {
    width: 73px;
    background: #37373a;
}

.uipath {
    width: 36px;
    height: 36px;
    background: #074a9d;
    color: #fff;
    font-size: 26px;
    font-weight: bold;
    line-height: 36px;
    text-align: center;
}

.tray {
    display: flex;
    align-items: center;
    color: #fff;
}

.tray-chevron {
    margin-right: 15px;
}

.tray-cloud {
    margin-right: 12px;
}

.tray-network {
    margin-right: 12px;
}

.tray-sound {
    position: relative;
    width: 24px;
    margin-right: -2px;
}

.sound-x {
    position: absolute;
    left: 11px;
    top: 8px;
    width: 13px;
    height: 13px;
    border-radius: 50%;
    background: #d8202c;
    font-size: 13px;
    line-height: 12px;
    text-align: center;
}

.clock {
    width: 120px;
    display: flex;
    flex-direction: column;
    align-items: center;
    font-family: "Open Sans", sans-serif;
    font-size: 17.5px;
    line-height: 28px;
    color: #e8e8e8;
}

.notify {
    position: relative;
    width: 55px;
    margin-left: 10px;
}

.notify-count {
    position: absolute;
    left: 9px;
    top: 11px;
    width: 28px;
    height: 28px;
    border-radius: 50%;
    background: #333;
    border: 1px solid #777;
    box-sizing: border-box;
    font-size: 18px;
    font-weight: bold;
    line-height: 26px;
    text-align: center;
}
```
